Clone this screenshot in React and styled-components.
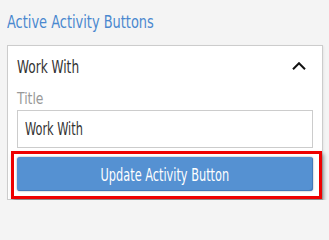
import styled, { createGlobalStyle } from "styled-components";

const GlobalStyle = createGlobalStyle`
  body {
    margin: 0;
    background: #f4f4f4;
    font-family: "DejaVu Sans Condensed", "DejaVu Sans", sans-serif;
    font-stretch: condensed;
  }
`;

const Page = styled.div`
  padding: 12px 6px 0 7px;
`;

// the reference uses a narrow face; squeeze the DejaVu condensed one to match
const Narrow = styled.span`
  display: inline-block;
  white-space: nowrap;
  transform: scaleX(${(p) => p.$scale || 0.78});
  transform-origin: ${(p) => (p.$center ? "center" : "left")} center;
`;

const Heading = styled.h3`
  margin: 0;
  height: 33px;
  font-size: 18px;
  font-weight: normal;
  line-height: 20px;
  color: #4a88cf;
`;

const Panel = styled.div`
  background: #fff;
  border: 1px solid #cccccc;
  padding: 0 9px 0 9px;
  box-shadow: 1px 1px 2px rgba(0, 0, 0, 0.06);
`;

const PanelHeader = styled.div`
  height: 40px;
  display: flex;
  align-items: center;
  justify-content: space-between;
  font-size: 18px;
  color: #333;
  padding-right: 7px;
`;

const Label = styled.label`
  display: block;
  box-sizing: border-box;
  height: 24px;
  padding-top: 4px;
  font-size: 16px;
  line-height: 18px;
  color: #999;
`;

const InputBox = styled.div`
  box-sizing: border-box;
  height: 38px;
  border: 1px solid #cccccc;
  padding: 0 7px;
  display: flex;
  align-items: center;
  font-size: 17px;
  color: #333;
  background: #fff;
`;

const Highlight = styled.div`
  margin: 3px -9px 0 -6px;
  border: 3px solid #ee0000;
  padding: 3px 6px 5px 3px;
  box-shadow: 2px 3px 4px rgba(0, 0, 0, 0.35);
`;

const Button = styled.button`
  display: flex;
  align-items: center;
  justify-content: center;
  width: 100%;
  height: 34px;
  border: none;
  border-radius: 3px;
  background: #5591d2;
  box-shadow: inset -1px -1px 0 #4479b8, 0 0 2px rgba(0, 0, 0, 0.4);
  color: #fff;
  font-family: inherit;
  font-size: 18px;
  padding: 0;
`;

function ChevronUp() {
  return (
    <svg width="14" height="8" viewBox="0 0 14 8">
      <path d="M1 7.2 L7 1.2 L13 7.2" fill="none" stroke="#111" strokeWidth="2" />
    </svg>
  );
}

export default function App() {
  return (
    <Page>
      <GlobalStyle />
      <Heading>
        <Narrow $scale={0.8}>Active Activity Buttons</Narrow>
      </Heading>
      <Panel>
        <PanelHeader>
          <Narrow $scale={0.75}>Work With</Narrow>
          <ChevronUp />
        </PanelHeader>
        <Label>
          <Narrow $scale={0.86}>Title</Narrow>
        </Label>
        <InputBox>
          <Narrow $scale={0.74}>Work With</Narrow>
        </InputBox>
        <Highlight>
          <Button>
            <Narrow $scale={0.7} $center>Update Activity Button</Narrow>
          </Button>
        </Highlight>
      </Panel>
    </Page>
  );
}
